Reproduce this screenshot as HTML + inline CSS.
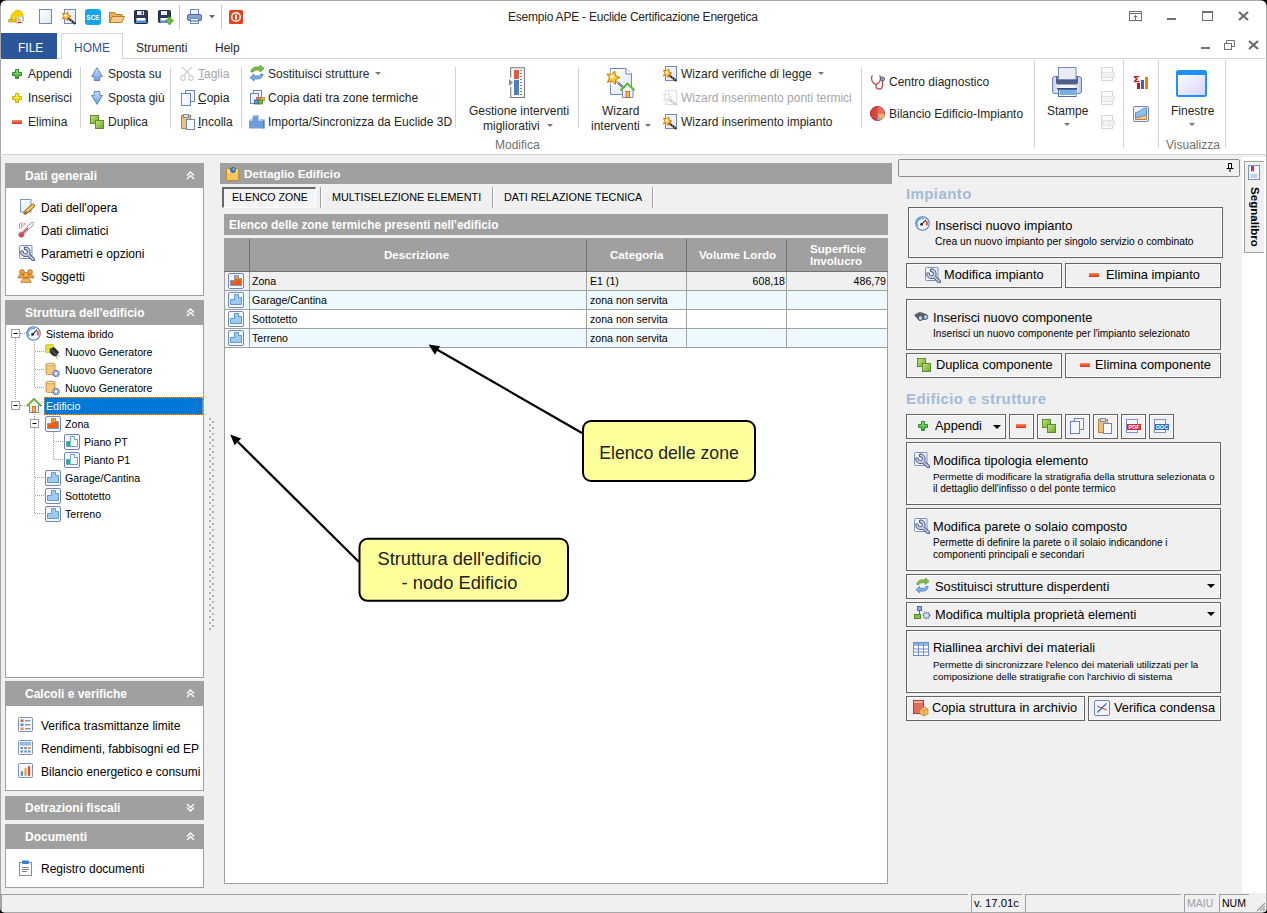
<!DOCTYPE html>
<html><head><meta charset="utf-8">
<style>
*{margin:0;padding:0;box-sizing:border-box}
html,body{width:1267px;height:913px;overflow:hidden;background:#f0f0f0;font-family:"Liberation Sans",sans-serif;font-size:12px;color:#000;position:relative}
.a{position:absolute}
.t{position:absolute;white-space:nowrap;line-height:1}
.rb{color:#262626;font-size:12px}
.sep{position:absolute;width:1px;background:#d4d4d4}
.ph{position:absolute;background:#a0a0a0}
.pht{position:absolute;white-space:nowrap;line-height:1;color:#fff;font-weight:bold;font-size:12px}
.pb{position:absolute;background:#fff;border:1px solid #a0a0a0;border-top:none}
.tr{position:absolute;white-space:nowrap;line-height:1;font-size:10.65px;color:#000}
.gt{position:absolute;white-space:nowrap;line-height:1;font-size:10.6px;color:#000}
.bx{position:absolute;border:1px solid #646464;background:#f0f0f0;box-shadow:inset 0 0 0 1px #fcfcfc}
.bt{position:absolute;white-space:nowrap;line-height:1;font-size:12.8px;color:#000}
.bs{position:absolute;white-space:nowrap;line-height:1;font-size:10.2px;color:#000}
svg{position:absolute;overflow:visible}
</style></head><body>
<svg width="0" height="0" style="position:absolute">
<defs>
<linearGradient id="gG" x1="0" y1="0" x2="0" y2="1"><stop offset="0" stop-color="#9ee07f"/><stop offset="1" stop-color="#2fa52f"/></linearGradient>
<linearGradient id="gY" x1="0" y1="0" x2="0" y2="1"><stop offset="0" stop-color="#fff36b"/><stop offset="1" stop-color="#e8d000"/></linearGradient>
<linearGradient id="gR" x1="0" y1="0" x2="0" y2="1"><stop offset="0" stop-color="#ff8a5c"/><stop offset="1" stop-color="#e0301a"/></linearGradient>
<linearGradient id="gB" x1="0" y1="0" x2="0" y2="1"><stop offset="0" stop-color="#c7defa"/><stop offset="1" stop-color="#6ea0dd"/></linearGradient>
<linearGradient id="gDoc" x1="0" y1="0" x2="1" y2="1"><stop offset="0" stop-color="#fff"/><stop offset="1" stop-color="#dde6f5"/></linearGradient>
<linearGradient id="gGr" x1="0" y1="0" x2="1" y2="1"><stop offset="0" stop-color="#c8e67a"/><stop offset="1" stop-color="#6aa52a"/></linearGradient>
<symbol id="plus" viewBox="0 0 10 10"><path d="M3.5 .5h3v3h3v3h-3v3h-3v-3h-3v-3h3z" stroke-width="1"/></symbol>
<symbol id="minus" viewBox="0 0 10 4"><rect x="0" y="0" width="10" height="4" fill="url(#gR)"/></symbol>
<symbol id="dup" viewBox="0 0 14 14"><rect x=".5" y=".5" width="8" height="8" fill="url(#gGr)" stroke="#5b8f2a"/><rect x="5.5" y="5.5" width="8" height="8" fill="url(#gGr)" stroke="#5b8f2a"/></symbol>
<symbol id="copy" viewBox="0 0 14 16"><rect x="4.5" y=".5" width="9" height="11" fill="#f4f7fc" stroke="#6b86c0"/><rect x=".5" y="3.5" width="9" height="12" fill="#f4f7fc" stroke="#6b86c0"/></symbol>
<symbol id="paste" viewBox="0 0 14 16"><rect x=".5" y="1.5" width="9" height="13" fill="#e9c07d" stroke="#b9853b"/><rect x="2.5" y=".5" width="5" height="3" fill="#ddd" stroke="#7a8fb5"/><rect x="5.5" y="5.5" width="8" height="10" fill="#f7f9fd" stroke="#6b86c0"/></symbol>
<symbol id="wrench" viewBox="0 0 16 16"><rect x=".5" y=".5" width="12.5" height="13" rx="1" fill="#f2f5fb" stroke="#7b8fca"/><g fill="none" stroke-linecap="round"><path d="M6.6 3.4A3.4 3.4 0 1 1 3 7" stroke="#3e4a66" stroke-width="3.6"/><path d="M9 9.5l5.2 5" stroke="#3e4a66" stroke-width="3.6"/><path d="M6.6 3.4A3.4 3.4 0 1 1 3 7" stroke="#c4d4ee" stroke-width="1.8"/><path d="M9 9.5l5.2 5" stroke="#b4c8e8" stroke-width="1.8"/></g></symbol>
<symbol id="gauge" viewBox="0 0 16 16"><circle cx="8" cy="8" r="7.2" fill="#f2f6fc" stroke="#5577c4" stroke-width="1.2"/><path d="M3.2 10.8A5.2 5.2 0 0 1 9.5 2.9" fill="none" stroke="#66a8f0" stroke-width="1.8"/><path d="M12.2 5.5A5.2 5.2 0 0 1 12.5 10" fill="none" stroke="#e0402c" stroke-width="1.8"/><path d="M7 9l4.8-4.8" stroke="#2a2a3a" stroke-width="1.2"/><circle cx="7" cy="9" r="1.5" fill="#2a2a3a"/></symbol>
<symbol id="wiz" viewBox="0 0 16 16"><rect x="3.5" y=".5" width="11" height="14" fill="url(#gDoc)" stroke="#6f86be"/><path d="M7 9l7.5 6" stroke="#222" stroke-width="2.2"/><path d="M7.8 9.6l1 .8M10 11.4l1 .8M12.2 13.2l1 .8" stroke="#bbb" stroke-width="1"/><path d="M6.84 2.69 L7.02 5.97 L10.00 7.37 L6.93 8.55 L6.52 11.81 L4.45 9.27 L1.22 9.88 L3.00 7.12 L1.42 4.24 L4.59 5.09z" fill="#ffc83a" stroke="#e07818" stroke-width="1"/><circle cx="4.6" cy="6.5" r="1.3" fill="#fff8d0"/></symbol>
<symbol id="sost" viewBox="0 0 16 16"><path d="M2 7c0-3 2.5-5 5.5-5H11V0l4 3.5-4 3.5V5H7.5C5.5 5 4.5 6 4.2 7z" fill="#7cc24a" stroke="#4d8e25" stroke-width=".7"/><path d="M14 9c0 3-2.5 5-5.5 5H5v2l-4-3.5L5 9v2h3.5c2 0 3-1 3.3-2z" fill="#7fb0e8" stroke="#3f73b8" stroke-width=".7"/></symbol>
<symbol id="zoneB" viewBox="0 0 16 16"><rect x=".5" y=".5" width="15" height="15" rx="1.5" fill="#f7f9fd" stroke="#6f84c2"/><path d="M2.5 12.5V7.5h4v-5h4v3h3v7z" fill="#9ccbef" stroke="#5f9ad6"/></symbol>
<symbol id="zoneO" viewBox="0 0 16 16"><rect x=".5" y=".5" width="15" height="15" rx="1.5" fill="#f7f9fd" stroke="#6f84c2"/><path d="M2.5 12.5V7.5h4v-5h4v3h3v7z" fill="#ff5a00" stroke="#6f9ad0"/><path d="M7 3h3v3H7z" fill="#ff9a1a"/></symbol>
<symbol id="piano" viewBox="0 0 16 16"><rect x=".5" y=".5" width="15" height="15" rx="1.5" fill="#f7f9fd" stroke="#6f84c2"/><path d="M2.5 12.5V7.5h4v-5h4v3h3v7z" fill="#f3f6fb" stroke="#6f9ad6"/><rect x="3" y="8" width="3.5" height="4" fill="#10c060"/></symbol>
<symbol id="pdfd" viewBox="0 0 16 14"><rect x="1.5" y=".5" width="11" height="13" fill="#fafafa" stroke="#d8d8d8"/><rect x="2" y="5" width="13" height="6" fill="#e4e4e4"/><text x="8.5" y="10" font-size="5.5" font-family="Liberation Sans" font-weight="bold" fill="#fff" text-anchor="middle">PDF</text></symbol>
</defs></svg>

<!-- title bar -->
<div class="a" style="left:0;top:0;width:1267px;height:155px;background:#fff"></div>
<div class="a" style="left:0;top:0;width:1267px;height:1px;background:#a8a8a8"></div>
<div class="a" style="left:0;top:0;width:1px;height:913px;background:#a8a8a8"></div>
<div class="a" style="left:1266px;top:0;width:1px;height:913px;background:#a8a8a8"></div>
<div class="a" style="left:0;top:154px;width:1267px;height:1px;background:#d5d5d5"></div>
<div class="t" style="left:508px;top:11px;font-size:12px;letter-spacing:-.22px;color:#262626">Esempio APE - Euclide Certificazione Energetica</div>

<!-- QAT icons -->
<svg style="left:8px;top:10px" width="16" height="15" viewBox="0 0 16 15"><path d="M2.5 10C2.5 4 6 .3 10 .3s5.5 3.5 5.5 9.5V11z" fill="#f4d000" stroke="#d4a800" stroke-width=".7"/><path d="M.3 10.5c0-1.2 1.5-1.5 3-1.2l11 1.2v1.5H1c-.5 0-.7-.8-.7-1.5z" fill="#f0c800" stroke="#a88a20" stroke-width=".7"/><path d="M6 1.5c-1 2-1 5 0 8" stroke="#fff27a" stroke-width="1"/><rect x="8.8" y="6.8" width="5.8" height="7" fill="#f4f8fc" stroke="#b8c8dc" stroke-width=".6"/><path d="M9.5 8h1.5M9.5 9.5h2.5M9.5 11h3.5M9.5 12.5h4" stroke-width="1.1"/><path d="M9.5 8h1.5" stroke="#3a9a3a"/><path d="M9.5 9.5h2.5" stroke="#e0b020"/><path d="M9.5 11h3.5" stroke="#f08020"/><path d="M9.5 12.5h4" stroke="#e02020"/></svg>
<svg style="left:39px;top:9px" width="13" height="15" viewBox="0 0 13 15"><rect x=".5" y=".5" width="12" height="14" fill="url(#gDoc)" stroke="#6f86be"/></svg>
<svg style="left:61px;top:9px" width="16" height="16"><use href="#wiz" width="16" height="16"/></svg>
<svg style="left:85px;top:9px" width="16" height="16" viewBox="0 0 16 16"><rect x="0" y="0" width="16" height="16" rx="3" fill="#13a4ee"/><text x="8" y="11" font-size="6.5" font-family="Liberation Sans" font-weight="bold" fill="#fff" text-anchor="middle">SCE</text></svg>
<svg style="left:109px;top:11px" width="16" height="12" viewBox="0 0 16 12"><path d="M.5 11.5v-10h5l1.5 2h6v2" fill="#e9b15a" stroke="#b97a2a"/><path d="M.5 11.5l3-6h12l-3 6z" fill="#f6cf86" stroke="#b97a2a"/></svg>
<svg style="left:134px;top:10px" width="14" height="14" viewBox="0 0 14 14"><rect x=".5" y=".5" width="13" height="13" rx="1" fill="#2e3a4e" stroke="#1e2838"/><rect x="3" y="1" width="7" height="4" fill="#e8ecf2"/><rect x="7.5" y="1.5" width="1.5" height="3" fill="#2e3a4e"/><rect x="2.5" y="8" width="9" height="5" fill="#fff"/><rect x="2.5" y="10.5" width="9" height="2.5" fill="#4a90d9"/></svg>
<svg style="left:158px;top:10px" width="16" height="15" viewBox="0 0 16 15"><rect x=".5" y=".5" width="12" height="12" rx="1" fill="#2e3a4e" stroke="#1e2838"/><rect x="3" y="1" width="6" height="4" fill="#e8ecf2"/><rect x="2.5" y="8" width="8" height="4.5" fill="#fff"/><rect x="2.5" y="10.5" width="8" height="2" fill="#4a90d9"/><path d="M10 7h3v3h2.5L11.5 15 7.5 10H10z" fill="#6fc13c" stroke="#3f8a1c" stroke-width=".7"/></svg>
<div class="a" style="left:179px;top:5px;width:1px;height:24px;background:#c8c8c8"></div>
<svg style="left:187px;top:9px" width="15" height="15" viewBox="0 0 15 15"><rect x="3.5" y=".5" width="8" height="5" fill="#eef1f8" stroke="#6f86be"/><rect x=".5" y="5.5" width="14" height="6" rx="1.5" fill="#8aa4d6" stroke="#4f69a8"/><rect x="3.5" y="9.5" width="8" height="5" fill="#fff" stroke="#6f86be"/><rect x="4" y="11" width="7" height="2" fill="#7db3e6"/></svg>
<svg style="left:209px;top:15px" width="6" height="4" viewBox="0 0 6 4"><path d="M0 0h6L3 3.5z" fill="#6a6a6a"/></svg>
<div class="a" style="left:221px;top:5px;width:1px;height:24px;background:#c8c8c8"></div>
<svg style="left:229px;top:10px" width="14" height="14" viewBox="0 0 14 14"><rect x="0" y="0" width="14" height="14" rx="1.5" fill="#e4431b"/><circle cx="7" cy="7" r="4.3" fill="none" stroke="#fff" stroke-width="1.5"/><rect x="6" y="4.5" width="2" height="5" rx=".5" fill="#fff"/></svg>

<!-- window controls -->
<svg style="left:1129px;top:11px" width="13" height="10" viewBox="0 0 13 10"><rect x=".5" y=".5" width="12" height="9" fill="none" stroke="#707070"/><path d="M.5 2.5h12" stroke="#707070"/><path d="M6.5 9V4.5M4.5 6.5l2-2 2 2" fill="none" stroke="#707070"/></svg>
<div class="a" style="left:1167px;top:18px;width:9px;height:2px;background:#707070"></div>
<svg style="left:1202px;top:11px" width="11" height="10" viewBox="0 0 11 10"><rect x=".5" y=".5" width="10" height="9" fill="none" stroke="#707070"/><rect x="0" y="0" width="11" height="2" fill="#707070"/></svg>
<svg style="left:1238px;top:11px" width="11" height="10" viewBox="0 0 11 10"><path d="M1 1l9 8M10 1L1 9" stroke="#6a6a6a" stroke-width="2.1"/></svg>
<div class="a" style="left:1201px;top:47px;width:9px;height:2px;background:#707070"></div>
<svg style="left:1224px;top:40px" width="11" height="10" viewBox="0 0 11 10"><rect x=".5" y="3.5" width="7" height="6" fill="none" stroke="#707070"/><path d="M2.5 3.5v-3h8v6h-3" fill="none" stroke="#707070"/></svg>
<svg style="left:1248px;top:40px" width="11" height="10" viewBox="0 0 11 10"><path d="M1 1l9 8M10 1L1 9" stroke="#6a6a6a" stroke-width="2.1"/></svg>

<!-- tabs -->
<div class="a" style="left:0;top:58px;width:1267px;height:1px;background:#d5d5d5"></div>
<div class="a" style="left:1px;top:33px;width:56px;height:26px;background:#2b579a"></div>
<div class="t" style="left:18px;top:42px;color:#fff;font-size:12px">FILE</div>
<div class="a" style="left:61px;top:33px;width:62px;height:26px;background:#fff;border:1px solid #d5d5d5;border-bottom:none"></div>
<div class="t" style="left:74px;top:42px;color:#2b579a;font-size:12px">HOME</div>
<div class="t rb" style="left:136px;top:42px">Strumenti</div>
<div class="t rb" style="left:215px;top:42px">Help</div>

<!-- ribbon group 1 -->
<svg style="left:12px;top:69px" width="10" height="10"><use href="#plus" width="10" height="10" fill="url(#gG)" stroke="#2d8a2d"/></svg>
<svg style="left:12px;top:93px" width="10" height="10"><use href="#plus" width="10" height="10" fill="url(#gY)" stroke="#c9b300"/></svg>
<svg style="left:12px;top:120px" width="10" height="4"><use href="#minus" width="10" height="4"/></svg>
<div class="t rb" style="left:28px;top:68px">Appendi</div>
<div class="t rb" style="left:28px;top:92px">Inserisci</div>
<div class="t rb" style="left:28px;top:116px">Elimina</div>
<div class="sep" style="left:80px;top:67px;height:61px"></div>
<svg style="left:91px;top:67px" width="12" height="14" viewBox="0 0 12 14"><path d="M6 .6l5.4 8.9H8.8v4h-5.6v-4H.6z" fill="url(#gB)" stroke="#4f7fc4" stroke-width=".9"/></svg>
<svg style="left:91px;top:91px" width="12" height="14" viewBox="0 0 12 14"><path d="M6 13.4l5.4-8.9H8.8v-4h-5.6v4H.6z" fill="url(#gB)" stroke="#4f7fc4" stroke-width=".9"/></svg>
<svg style="left:90px;top:115px" width="14" height="14"><use href="#dup" width="14" height="14"/></svg>
<div class="t rb" style="left:108px;top:68px">Sposta su</div>
<div class="t rb" style="left:108px;top:92px">Sposta giù</div>
<div class="t rb" style="left:108px;top:116px">Duplica</div>
<div class="sep" style="left:170px;top:67px;height:61px"></div>
<svg style="left:180px;top:66px" width="14" height="15" viewBox="0 0 14 15"><path d="M2 1l9 9M12 1l-9 9" stroke="#cfcfcf" stroke-width="1.3"/><circle cx="3" cy="12" r="2.3" fill="none" stroke="#cfcfcf" stroke-width="1.2"/><circle cx="11" cy="12" r="2.3" fill="none" stroke="#cfcfcf" stroke-width="1.2"/></svg>
<svg style="left:181px;top:90px" width="14" height="16"><use href="#copy" width="14" height="16"/></svg>
<svg style="left:181px;top:114px" width="14" height="16"><use href="#paste" width="14" height="16"/></svg>
<div class="t rb" style="left:198px;top:68px;color:#a6a6a6">Taglia</div>
<div class="a" style="left:198px;top:79px;width:6px;height:1px;background:#a6a6a6"></div>
<div class="t rb" style="left:198px;top:92px">Copia</div>
<div class="a" style="left:198px;top:103px;width:8px;height:1px;background:#262626"></div>
<div class="t rb" style="left:198px;top:116px">Incolla</div>
<div class="a" style="left:198px;top:127px;width:3px;height:1px;background:#262626"></div>
<div class="sep" style="left:241px;top:67px;height:61px"></div>
<svg style="left:249px;top:65px" width="16" height="16"><use href="#sost" width="16" height="16"/></svg>
<svg style="left:250px;top:90px" width="16" height="15" viewBox="0 0 16 15"><rect x="3.5" y=".5" width="8" height="9" fill="#f4f7fc" stroke="#6b86c0"/><rect x=".5" y="3.5" width="8" height="10" fill="#eef2fa" stroke="#6b86c0"/><rect x="6.5" y="7.5" width="4" height="3.5" fill="#f08060" stroke="#b05030" stroke-width=".6"/><rect x="10.5" y="7.5" width="4" height="3.5" fill="#f0b050" stroke="#b07020" stroke-width=".6"/><rect x="4.5" y="10" width="4" height="4" fill="#4a9ae0" stroke="#1e5aa0" stroke-width=".7"/><rect x="8.5" y="10" width="4" height="4" fill="#7cc030" stroke="#3a7a10" stroke-width=".7"/></svg>
<svg style="left:249px;top:115px" width="16" height="14" viewBox="0 0 16 14"><path d="M0 13.5V5.5h3.5V1.5L5 0h4.5v5.5H13l1.5-1.5H15.5v9.5z" fill="#6c9fd8"/><path d="M3.5 1.5L5 0h4.5L8 1.5z" fill="#a8c8ee"/><path d="M0 5.5L1.5 4h2v1.5zM9.5 5.5L11 4h4.5L14 5.5z" fill="#a8c8ee"/><path d="M14 5.5h1.5v8H14z" fill="#4f82c0"/></svg>
<div class="t rb" style="left:268px;top:68px">Sostituisci strutture</div>
<svg style="left:375px;top:72px" width="6" height="4" viewBox="0 0 6 4"><path d="M0 0h6L3 3z" fill="#777"/></svg>
<div class="t rb" style="left:268px;top:92px">Copia dati tra zone termiche</div>
<div class="t rb" style="left:268px;top:116px">Importa/Sincronizza da Euclide 3D</div>
<div class="sep" style="left:455px;top:67px;height:61px"></div>
<svg style="left:509px;top:67px" width="16" height="31" viewBox="0 0 16 31"><path d="M1.7 10.8V.7h13.8v29.8H1.7V20" fill="none" stroke="#7a7a7a" stroke-width="1.1"/><rect x="5" y="3" width="5" height="9" fill="#dd5c3a"/><rect x="5" y="13" width="5" height="15" fill="#4a7fc0"/><path d="M11 3.3h2M11 6.4h2M11 9.4h2M11 12.4h2M11 15.4h2M11 18.4h2M11 21.4h2M11 24.4h2M11 27.4h2" stroke="#777" stroke-width="1"/><path d="M0 12l4 3.5-4 3.5z" fill="#8a8a8a"/></svg>
<div class="t rb" style="left:469px;top:105px">Gestione interventi</div>
<div class="t rb" style="left:483px;top:120px">migliorativi</div>
<svg style="left:547px;top:124px" width="6" height="3" viewBox="0 0 6 3"><path d="M0 0h6L3 3z" fill="#777"/></svg>
<div class="t rb" style="left:495px;top:139px;color:#6f6f6f">Modifica</div>
<div class="sep" style="left:578px;top:67px;height:61px"></div>
<svg style="left:604px;top:67px" width="31" height="31" viewBox="0 0 31 31"><path d="M6.5 1.5H22l5.5 5.5v20.5h-21z" fill="url(#gDoc)" stroke="#6f86be"/><path d="M22 1.5V7h5.5" fill="#fff" stroke="#6f86be"/><path d="M12 14l9 8" stroke="#3a4a6a" stroke-width="2"/><path d="M12.5 14.5l8 7" stroke="#fff" stroke-width=".6"/><circle cx="8.9" cy="10.8" r="7.5" fill="#fff6b0" opacity=".5"/><path d="M10.71 4.04 L11.46 8.72 L15.89 10.43 L11.67 12.60 L11.41 17.34 L8.05 13.99 L3.46 15.21 L5.60 10.97 L3.03 6.99 L7.72 7.72z" fill="#ffcc33" stroke="#d8701a" stroke-width="1"/><circle cx="8" cy="9.5" r="2" fill="#fffbe0"/><path d="M18.5 21v9.5h10.5V21" fill="#f4f7fc" stroke="#6f86be"/><path d="M16.5 23.5l7-7 7 7" fill="none" stroke="#5cb82a" stroke-width="1.8"/><rect x="22" y="24.5" width="3.6" height="6" fill="#f5b860" stroke="#c8600a" stroke-width=".9"/></svg>
<div class="t rb" style="left:602px;top:105px">Wizard</div>
<div class="t rb" style="left:591px;top:120px">interventi</div>
<svg style="left:645px;top:124px" width="6" height="3" viewBox="0 0 6 3"><path d="M0 0h6L3 3z" fill="#777"/></svg>
<svg style="left:662px;top:66px" width="16" height="16"><use href="#wiz" width="16" height="16"/></svg>
<svg style="left:662px;top:90px;opacity:.25" width="16" height="16"><use href="#wiz" width="16" height="16" style="filter:grayscale(1)"/></svg>
<svg style="left:662px;top:114px" width="16" height="16"><use href="#wiz" width="16" height="16"/></svg>
<div class="t rb" style="left:681px;top:68px">Wizard verifiche di legge</div>
<svg style="left:818px;top:72px" width="6" height="4" viewBox="0 0 6 4"><path d="M0 0h6L3 3z" fill="#777"/></svg>
<div class="t rb" style="left:681px;top:92px;color:#a6a6a6">Wizard inserimento ponti termici</div>
<div class="t rb" style="left:681px;top:116px">Wizard inserimento impianto</div>
<div class="sep" style="left:861px;top:67px;height:61px"></div>
<svg style="left:870px;top:74px" width="16" height="16" viewBox="0 0 16 16"><path d="M2.5 1.5c-1.5 1-1.5 5 1 7.5 1.5 1.5 3.5 1.5 5 0 2.5-2.5 2.5-6.5 1-7.5" fill="none" stroke="#c05050" stroke-width="1.4"/><path d="M6 10v2c0 2.5 2 3 3.5 3s3-1 3-4V6" fill="none" stroke="#c05050" stroke-width="1.4"/><circle cx="12.5" cy="5" r="2" fill="#8fa8c8" stroke="#557"/></svg>
<svg style="left:870px;top:106px" width="15" height="15" viewBox="0 0 15 15"><circle cx="7.5" cy="7.5" r="7" fill="#d9453a" stroke="#a22"/><path d="M7.5 7.5V.5a7 7 0 0 1 7 7z" fill="#e46b5f"/><path d="M7.5 7.5h7a7 7 0 0 1-4 6.3z" fill="#f5b060"/><path d="M7.5 7.5l3 6.3a7 7 0 0 1-3 .7z" fill="#8ab4e6"/></svg>
<div class="t rb" style="left:889px;top:76px">Centro diagnostico</div>
<div class="t rb" style="left:889px;top:108px">Bilancio Edificio-Impianto</div>
<div class="sep" style="left:1034px;top:60px;height:88px"></div>
<svg style="left:1052px;top:67px" width="30" height="30" viewBox="0 0 30 30"><defs><linearGradient id="gPr" x1="0" y1="0" x2="1" y2="0"><stop offset="0" stop-color="#c8d0e4"/><stop offset=".3" stop-color="#f4f6fa"/><stop offset=".7" stop-color="#f4f6fa"/><stop offset="1" stop-color="#c0c8dc"/></linearGradient></defs><rect x=".5" y="9.5" width="29" height="17" rx="2.5" fill="url(#gPr)" stroke="#6f80b0"/><path d="M4 9.5h22v5.5c0 2-1 2.5-2.5 2.5h-17C5 17.5 4 17 4 15z" fill="#4f5f88"/><path d="M5 10h20v2H5z" fill="#8a9ac0"/><rect x="6.5" y=".5" width="17.5" height="12" fill="#e9edf6" stroke="#7888c0"/><rect x="5" y="21" width="20" height="1.5" fill="#3a4a78"/><rect x="6.5" y="22.5" width="17.5" height="7" fill="#fff" stroke="#5a6aa0"/><rect x="7.5" y="23" width="15.5" height="5" fill="#72b0e6"/></svg>
<div class="t rb" style="left:1047px;top:105px">Stampe</div>
<svg style="left:1064px;top:123px" width="6" height="3" viewBox="0 0 6 3"><path d="M0 0h6L3 3z" fill="#777"/></svg>
<svg style="left:1100px;top:67px" width="16" height="14"><use href="#pdfd" width="16" height="14"/></svg>
<svg style="left:1100px;top:91px" width="16" height="14" viewBox="0 0 16 14"><rect x="1.5" y=".5" width="11" height="13" fill="#fafafa" stroke="#d8d8d8"/><rect x="2" y="5" width="13" height="6" fill="#e4e4e4"/><text x="8.5" y="10" font-size="5.5" font-family="Liberation Sans" font-weight="bold" fill="#fff" text-anchor="middle">DOC</text></svg>
<svg style="left:1100px;top:115px" width="16" height="14" viewBox="0 0 16 14"><rect x="1.5" y=".5" width="11" height="13" fill="#fafafa" stroke="#d8d8d8"/><rect x="2" y="5" width="13" height="6" fill="#e4e4e4"/><text x="8.5" y="10" font-size="5.5" font-family="Liberation Sans" font-weight="bold" fill="#fff" text-anchor="middle">XLS</text></svg>
<div class="sep" style="left:1123px;top:60px;height:88px"></div>
<svg style="left:1133px;top:75px" width="16" height="14" viewBox="0 0 16 14"><path d="M.8 1h5.5v1.2H3.1l1.9 1.9-1.9 2h3.3v1.2H.8V6.2l2.1-2.1L.8 2z" fill="#c81818"/><rect x="4" y="8" width="3" height="6" fill="#d40f0f"/><rect x="8" y="5" width="3" height="9" fill="#3a68b8"/><rect x="12" y="2" width="3" height="12" fill="#f57c00"/></svg>
<svg style="left:1133px;top:106px" width="16" height="16" viewBox="0 0 16 16"><rect x=".5" y=".5" width="15" height="15" rx="1.5" fill="#f2f5fb" stroke="#6f84c2"/><path d="M2.5 9.5L13.5 6v7.5h-11z" fill="#f5c878" stroke="#b06a30" stroke-width=".8"/><path d="M2.5 6.5c4 0 5-4 11-4.5v7c-4 .5-6.5 2.5-11 2.5z" fill="#8cc0ec" stroke="#4a80c0" stroke-width=".8"/></svg>
<div class="sep" style="left:1158px;top:60px;height:88px"></div>
<svg style="left:1176px;top:70px" width="31" height="27" viewBox="0 0 31 27"><defs><linearGradient id="gW" x1="0" y1="0" x2="1" y2="1"><stop offset="0" stop-color="#fff"/><stop offset="1" stop-color="#d6d4fa"/></linearGradient></defs><rect x="1" y="1" width="29" height="25" rx="1.5" fill="url(#gW)" stroke="#1e90ff" stroke-width="2"/><rect x="1" y="1" width="29" height="4" fill="#1e90ff"/></svg>
<div class="t rb" style="left:1171px;top:105px">Finestre</div>
<svg style="left:1189px;top:123px" width="6" height="3" viewBox="0 0 6 3"><path d="M0 0h6L3 3z" fill="#777"/></svg>
<div class="t rb" style="left:1166px;top:139px;color:#6f6f6f">Visualizza</div>
<div class="sep" style="left:1225px;top:60px;height:88px"></div>
<!-- left panel -->
<div class="ph" style="left:5px;top:163px;width:199px;height:25px"></div>
<div class="pht" style="left:25px;top:170px">Dati generali</div>
<svg style="left:186px;top:171px" width="9" height="9" viewBox="0 0 9 9"><path d="M1 4.5l3.5-3.5 3.5 3.5M1 8l3.5-3.5L8 8" fill="none" stroke="#fff" stroke-width="1.3"/></svg>
<div class="pb" style="left:5px;top:188px;width:199px;height:108px"></div>
<svg style="left:19px;top:199px" width="16" height="16" viewBox="0 0 16 16"><rect x="1.5" y=".5" width="10.5" height="12.5" fill="url(#gDoc)" stroke="#7d94c8"/><path d="M6.3 13.7l7.8-7.2" stroke="#8a5a18" stroke-width="4" stroke-linecap="round"/><path d="M6.3 13.7l7.8-7.2" stroke="#f4c85a" stroke-width="2.4" stroke-linecap="round"/><path d="M4.6 15.4l2.2-3.2 1 1z" fill="#222"/></svg>
<svg style="left:18px;top:222px" width="16" height="16" viewBox="0 0 16 16"><path d="M1.5 1c1 1-1 2 0 3s-1 2 0 3M3.8 .5c1 1-1 2 0 3s-1 2 0 3M6.1 1c1 1-1 2 0 3" stroke="#e03838" stroke-width=".8" fill="none"/><path d="M3.5 12.5L14.3 1.7" stroke="#8e92a8" stroke-width="3.6" stroke-linecap="round"/><path d="M3.5 12.5L14.3 1.7" stroke="#fff" stroke-width="2" stroke-linecap="round"/><path d="M3.5 12.5L10 6" stroke="#e02828" stroke-width="1.1"/><circle cx="3.3" cy="12.7" r="2.6" fill="#e02828" stroke="#9a9aae" stroke-width=".8"/><circle cx="2.7" cy="12" r=".8" fill="#ffb0b0"/></svg>
<svg style="left:19px;top:245px" width="16" height="16"><use href="#wrench" width="16" height="16"/></svg>
<svg style="left:18px;top:268px" width="16" height="15" viewBox="0 0 16 15"><circle cx="4" cy="4" r="2.5" fill="#e8a040" stroke="#a86010" stroke-width=".6"/><circle cx="12" cy="4" r="2.5" fill="#e8a040" stroke="#a86010" stroke-width=".6"/><path d="M0 10c0-3 2-3.5 4-3.5s4 .5 4 3.5zM8 10c0-3 2-3.5 4-3.5s4 .5 4 3.5z" fill="#e8a040" stroke="#a86010" stroke-width=".6"/><circle cx="8" cy="7" r="2.7" fill="#f0b050" stroke="#a86010" stroke-width=".6"/><path d="M3 14.5c0-3.5 2.5-4 5-4s5 .5 5 4z" fill="#f0b050" stroke="#a86010" stroke-width=".6"/></svg>
<div class="t" style="left:41px;top:202px">Dati dell'opera</div>
<div class="t" style="left:41px;top:225px">Dati climatici</div>
<div class="t" style="left:41px;top:248px">Parametri e opzioni</div>
<div class="t" style="left:41px;top:271px">Soggetti</div>

<div class="ph" style="left:5px;top:300px;width:199px;height:25px"></div>
<div class="pht" style="left:25px;top:307px">Struttura dell'edificio</div>
<svg style="left:186px;top:308px" width="9" height="9" viewBox="0 0 9 9"><path d="M1 4.5l3.5-3.5 3.5 3.5M1 8l3.5-3.5L8 8" fill="none" stroke="#fff" stroke-width="1.3"/></svg>
<div class="pb" style="left:5px;top:325px;width:199px;height:353px"></div>
<!-- tree lines -->
<svg style="left:0;top:0" width="210" height="530" viewBox="0 0 210 530">
<g stroke="#a0a0a0" stroke-width="1" stroke-dasharray="1 1" fill="none">
<path d="M15.5 338v62"/><path d="M20 333.5h5"/><path d="M20 405.5h5"/>
<path d="M34.5 342v45"/><path d="M35 351.5h10M35 369.5h10M35 387.5h10"/>
<path d="M34.5 414v100"/><path d="M35 477.5h10M35 495.5h10M35 513.5h10"/>
<path d="M53.5 430v30"/><path d="M54 441.5h10M54 459.5h10"/>
</g>
<g fill="#fff" stroke="#a0a0a0"><rect x="11.5" y="329.5" width="8" height="8"/><rect x="11.5" y="401.5" width="8" height="8"/><rect x="30.5" y="419.5" width="8" height="8"/></g>
<g stroke="#000"><path d="M13.5 333.5h4M13.5 405.5h4M32.5 423.5h4"/></g>
</svg>
<svg style="left:26px;top:326px" width="15" height="15"><use href="#gauge" width="15" height="15"/></svg>
<svg style="left:45px;top:344px" width="16" height="16" viewBox="0 0 16 16"><rect x=".5" y=".5" width="8" height="8" rx="1" fill="#e6dc3a" stroke="#c8b820" stroke-width=".7"/><path d="M6 4.5l3-1.5 5 5-1.5 3z" fill="#2a2a2a"/><path d="M5 5.5c-1 2 0 4 2 5.5s4 2 5.5 1z" fill="#333"/><path d="M4.3 5l2-1 6 6-1 2z" fill="#444"/><path d="M10.5 12.5l2.5 2.5M12.5 10.5L15 13" stroke="#9aa" stroke-width="1"/></svg>
<svg style="left:45px;top:362px" width="16" height="16" viewBox="0 0 16 16"><path d="M1 2.5c0-1.5 9-1.5 9 0v9c0 1.5-9 1.5-9 0z" fill="#f5c978" stroke="#b58030" stroke-width=".8"/><ellipse cx="5.5" cy="2.5" rx="4.5" ry="1.3" fill="#fbe6b8" stroke="#b58030" stroke-width=".6"/><circle cx="11" cy="11.5" r="3.2" fill="#9ab0d8" stroke="#5570a8" stroke-width="1.2" stroke-dasharray="1.5 1"/><circle cx="11" cy="11.5" r="1.2" fill="#fff"/></svg>
<svg style="left:45px;top:380px" width="16" height="16" viewBox="0 0 16 16"><path d="M1 2.5c0-1.5 9-1.5 9 0v9c0 1.5-9 1.5-9 0z" fill="#f5c978" stroke="#b58030" stroke-width=".8"/><ellipse cx="5.5" cy="2.5" rx="4.5" ry="1.3" fill="#fbe6b8" stroke="#b58030" stroke-width=".6"/><circle cx="11" cy="11.5" r="3.2" fill="#9ab0d8" stroke="#5570a8" stroke-width="1.2" stroke-dasharray="1.5 1"/><circle cx="11" cy="11.5" r="1.2" fill="#fff"/></svg>
<svg style="left:26px;top:398px" width="16" height="15" viewBox="0 0 16 15"><path d="M3.5 7v7.5h9V7" fill="#eef2fb" stroke="#7080c8"/><path d="M.8 8.2L8 1.2l7.2 7" fill="none" stroke="#5aa82a" stroke-width="2.2"/><path d="M2 7.6L8 2l6 5.6" fill="none" stroke="#b8e890" stroke-width=".7"/><rect x="6.3" y="8.5" width="3.4" height="6" fill="#f5b050" stroke="#c06010" stroke-width=".8"/></svg>
<div class="a" style="left:44px;top:397px;width:159px;height:18px;background:#0078d7;border:1px dotted #f0a040"></div>
<svg style="left:45px;top:416px" width="16" height="16"><use href="#zoneO" width="16" height="16"/></svg>
<svg style="left:64px;top:434px" width="16" height="16"><use href="#piano" width="16" height="16"/></svg>
<svg style="left:64px;top:452px" width="16" height="16"><use href="#piano" width="16" height="16"/></svg>
<svg style="left:45px;top:470px" width="16" height="16"><use href="#zoneB" width="16" height="16"/></svg>
<svg style="left:45px;top:488px" width="16" height="16"><use href="#zoneB" width="16" height="16"/></svg>
<svg style="left:45px;top:506px" width="16" height="16"><use href="#zoneB" width="16" height="16"/></svg>
<div class="tr" style="left:46px;top:329px">Sistema ibrido</div>
<div class="tr" style="left:65px;top:347px">Nuovo Generatore</div>
<div class="tr" style="left:65px;top:365px">Nuovo Generatore</div>
<div class="tr" style="left:65px;top:383px">Nuovo Generatore</div>
<div class="tr" style="left:46px;top:401px;color:#fff">Edificio</div>
<div class="tr" style="left:65px;top:419px">Zona</div>
<div class="tr" style="left:84px;top:437px">Piano PT</div>
<div class="tr" style="left:84px;top:455px">Pianto P1</div>
<div class="tr" style="left:65px;top:473px">Garage/Cantina</div>
<div class="tr" style="left:65px;top:491px">Sottotetto</div>
<div class="tr" style="left:65px;top:509px">Terreno</div>

<div class="ph" style="left:5px;top:681px;width:199px;height:25px"></div>
<div class="pht" style="left:25px;top:688px">Calcoli e verifiche</div>
<svg style="left:186px;top:689px" width="9" height="9" viewBox="0 0 9 9"><path d="M1 4.5l3.5-3.5 3.5 3.5M1 8l3.5-3.5L8 8" fill="none" stroke="#fff" stroke-width="1.3"/></svg>
<div class="pb" style="left:5px;top:706px;width:199px;height:85px"></div>
<svg style="left:18px;top:717px" width="16" height="16" viewBox="0 0 16 16"><rect x=".5" y=".5" width="14" height="14" rx="1" fill="#f4f7fc" stroke="#7b90c4"/><rect x="2.5" y="2.5" width="3" height="2.5" fill="#e05a40"/><rect x="2.5" y="6.5" width="3" height="2.5" fill="#4a90e0"/><rect x="2.5" y="10.5" width="3" height="2.5" fill="#f09020"/><path d="M7 3.8h5.5M7 7.8h5.5M7 11.8h5.5" stroke="#5a6a90" stroke-width="1"/></svg>
<svg style="left:18px;top:740px" width="16" height="16" viewBox="0 0 16 16"><rect x=".5" y=".5" width="14" height="14" rx="1" fill="#f4f7fc" stroke="#7b90c4"/><rect x="2.5" y="2.5" width="10" height="2.5" fill="#9cc0ec" stroke="#5a80c0" stroke-width=".5"/><rect x="2.5" y="7" width="2.5" height="2" fill="#6b86c0"/><rect x="6.3" y="7" width="2.5" height="2" fill="#6b86c0"/><rect x="10" y="7" width="2.5" height="2" fill="#f09020"/><rect x="2.5" y="10.5" width="2.5" height="2" fill="#6b86c0"/><rect x="6.3" y="10.5" width="2.5" height="2" fill="#6b86c0"/><rect x="10" y="10.5" width="2.5" height="2" fill="#6b86c0"/></svg>
<svg style="left:18px;top:763px" width="16" height="16" viewBox="0 0 16 16"><rect x=".5" y=".5" width="14" height="14" rx="1" fill="#f4f7fc" stroke="#7b90c4"/><rect x="2.8" y="8" width="2.2" height="5" rx="1" fill="#4a90e0"/><rect x="6.4" y="5" width="2.2" height="8" rx="1" fill="#f0a020"/><rect x="10" y="3" width="2.2" height="10" rx="1" fill="#e04a30"/></svg>
<div class="t" style="left:41px;top:720px">Verifica trasmittanze limite</div>
<div class="t" style="left:41px;top:743px">Rendimenti, fabbisogni ed EP</div>
<div class="t" style="left:41px;top:766px">Bilancio energetico e consumi</div>

<div class="ph" style="left:5px;top:796px;width:199px;height:24px"></div>
<div class="pht" style="left:25px;top:802px">Detrazioni fiscali</div>
<svg style="left:186px;top:803px" width="9" height="9" viewBox="0 0 9 9"><path d="M1 1l3.5 3.5L8 1M1 4.5L4.5 8 8 4.5" fill="none" stroke="#fff" stroke-width="1.3"/></svg>

<div class="ph" style="left:5px;top:824px;width:199px;height:25px"></div>
<div class="pht" style="left:25px;top:831px">Documenti</div>
<svg style="left:186px;top:832px" width="9" height="9" viewBox="0 0 9 9"><path d="M1 4.5l3.5-3.5 3.5 3.5M1 8l3.5-3.5L8 8" fill="none" stroke="#fff" stroke-width="1.3"/></svg>
<div class="pb" style="left:5px;top:849px;width:199px;height:39px"></div>
<svg style="left:19px;top:860px" width="14" height="16" viewBox="0 0 14 16"><rect x=".5" y="2.5" width="12" height="13" fill="#fafafa" stroke="#8a8a8a"/><rect x="3" y=".5" width="7" height="3.5" rx="1" fill="#3a80d0"/><path d="M3 7.5h7M3 9.5h7M3 11.5h5" stroke="#8a8a8a"/></svg>
<div class="t" style="left:41px;top:863px">Registro documenti</div>

<!-- splitter dots -->
<div class="a" style="left:209px;top:418px;width:2px;height:212px;background:repeating-linear-gradient(#b0b0b0 0 2px,transparent 2px 6px)"></div>
<div class="a" style="left:212px;top:421px;width:2px;height:209px;background:repeating-linear-gradient(#b0b0b0 0 2px,transparent 2px 6px)"></div>
<!-- center -->
<div class="ph" style="left:220px;top:163px;width:672px;height:21px"></div>
<svg style="left:226px;top:167px" width="14" height="14" viewBox="0 0 14 14"><rect x=".5" y="1.5" width="12" height="12" rx="1" fill="#f5c860" stroke="#c08a20"/><rect x="1.5" y="2.5" width="10" height="3" fill="#fbe4a0"/><circle cx="7" cy="3" r="2.6" fill="#3a78d0" stroke="#1e4a90" stroke-width=".6"/><circle cx="7.7" cy="2.2" r=".9" fill="#a8d0f8"/></svg>
<div class="pht" style="left:244px;top:169px;font-size:11.8px">Dettaglio Edificio</div>
<!-- tabs -->
<div class="a" style="left:222px;top:187px;width:94px;height:21px;background:#f4f4f4;border-top:2px solid #696969;border-left:2px solid #696969;border-right:1px solid #fff;border-bottom:1px solid #fff"></div>
<div class="t" style="left:232px;top:192px;font-size:10.6px">ELENCO ZONE</div>
<div class="a" style="left:320px;top:187px;width:1px;height:21px;background:#a0a0a0"></div>
<div class="a" style="left:321px;top:187px;width:1px;height:21px;background:#fff"></div>
<div class="t" style="left:332px;top:192px;font-size:10.8px">MULTISELEZIONE ELEMENTI</div>
<div class="a" style="left:492px;top:187px;width:1px;height:21px;background:#a0a0a0"></div>
<div class="a" style="left:493px;top:187px;width:1px;height:21px;background:#fff"></div>
<div class="t" style="left:504px;top:192px;font-size:10.8px">DATI RELAZIONE TECNICA</div>
<div class="a" style="left:652px;top:187px;width:1px;height:21px;background:#a0a0a0"></div>
<div class="a" style="left:653px;top:187px;width:1px;height:21px;background:#fff"></div>
<!-- list header -->
<div class="ph" style="left:224px;top:214px;width:664px;height:21px"></div>
<div class="pht" style="left:229px;top:220px;font-size:11.85px">Elenco delle zone termiche presenti nell'edificio</div>
<!-- grid -->
<div class="a" style="left:224px;top:238px;width:664px;height:646px;background:#fff;border:1px solid #a0a0a0"></div>
<div class="a" style="left:224px;top:238px;width:664px;height:34px;background:#a0a0a0;border-bottom:1px solid #707070"></div>
<div class="a" style="left:249px;top:239px;width:1px;height:33px;background:#707070"></div>
<div class="a" style="left:586px;top:239px;width:1px;height:33px;background:#707070"></div>
<div class="a" style="left:686px;top:239px;width:1px;height:33px;background:#707070"></div>
<div class="a" style="left:786px;top:239px;width:1px;height:33px;background:#707070"></div>
<div class="pht" style="left:384px;top:249px;font-size:11.6px">Descrizione</div>
<div class="pht" style="left:610px;top:249px;font-size:11.6px">Categoria</div>
<div class="pht" style="left:699px;top:249px;font-size:11.6px">Volume Lordo</div>
<div class="pht" style="left:810px;top:243px;font-size:11.6px">Superficie</div>
<div class="pht" style="left:810px;top:255px;font-size:11.6px">Involucro</div>
<!-- rows -->
<div class="a" style="left:225px;top:272px;width:662px;height:19px;background:#f0f0f0;border-bottom:1px solid #a0a0a0"></div>
<div class="a" style="left:225px;top:291px;width:662px;height:19px;background:#eef9fd;border-bottom:1px solid #a0a0a0"></div>
<div class="a" style="left:225px;top:310px;width:662px;height:19px;background:#fff;border-bottom:1px solid #a0a0a0"></div>
<div class="a" style="left:225px;top:329px;width:662px;height:19px;background:#eef9fd;border-bottom:1px solid #a0a0a0"></div>
<div class="a" style="left:249px;top:272px;width:1px;height:76px;background:#a0a0a0"></div>
<div class="a" style="left:586px;top:272px;width:1px;height:76px;background:#a0a0a0"></div>
<div class="a" style="left:686px;top:272px;width:1px;height:76px;background:#a0a0a0"></div>
<div class="a" style="left:786px;top:272px;width:1px;height:76px;background:#a0a0a0"></div>
<svg style="left:228px;top:273px" width="16" height="16"><use href="#zoneO" width="16" height="16"/></svg>
<svg style="left:228px;top:292px" width="16" height="16"><use href="#zoneB" width="16" height="16"/></svg>
<svg style="left:228px;top:311px" width="16" height="16"><use href="#zoneB" width="16" height="16"/></svg>
<svg style="left:228px;top:330px" width="16" height="16"><use href="#zoneB" width="16" height="16"/></svg>
<div class="gt" style="left:252px;top:276px">Zona</div>
<div class="gt" style="left:252px;top:295px">Garage/Cantina</div>
<div class="gt" style="left:252px;top:314px">Sottotetto</div>
<div class="gt" style="left:252px;top:333px">Terreno</div>
<div class="gt" style="left:590px;top:276px">E1 (1)</div>
<div class="gt" style="left:590px;top:295px">zona non servita</div>
<div class="gt" style="left:590px;top:314px">zona non servita</div>
<div class="gt" style="left:590px;top:333px">zona non servita</div>
<div class="gt" style="left:740px;top:276px;width:45px;text-align:right">608,18</div>
<div class="gt" style="left:840px;top:276px;width:46px;text-align:right">486,79</div>
<!-- callouts -->
<svg style="left:0;top:0" width="900" height="620" viewBox="0 0 900 620">
<path d="M582 433L436 349" stroke="#000" stroke-width="2.2"/>
<path d="M428.6 344.5l11.5 1.8-5.2 8.4z" fill="#000"/>
<path d="M359 562L238 442" stroke="#000" stroke-width="2.2"/>
<path d="M230.2 434.4l11 4.2-6.6 6.6z" fill="#000"/>
<rect x="583" y="421" width="172" height="60" rx="8" fill="#ffff9c" stroke="#000" stroke-width="2"/>
<rect x="359.5" y="538.8" width="208.5" height="62" rx="8" fill="#ffff9c" stroke="#000" stroke-width="2"/>
</svg>
<div class="t" style="left:583px;top:445px;width:172px;text-align:center;font-size:17.7px;color:#222">Elenco delle zone</div>
<div class="t" style="left:355px;top:550px;width:209px;text-align:center;font-size:18.3px;color:#222">Struttura dell'edificio</div>
<div class="t" style="left:355px;top:574px;width:209px;text-align:center;font-size:18.3px;color:#222">- nodo Edificio</div>
<!-- right -->
<div class="a" style="left:1242px;top:157px;width:24px;height:736px;background:#fff"></div>
<div class="a" style="left:1244px;top:161px;width:20px;height:92px;background:#f0f0f0;border:1px solid #a0a0a0;border-right:none"></div>
<svg style="left:1248px;top:165px" width="12" height="15" viewBox="0 0 12 15"><rect x=".5" y=".5" width="11" height="14" fill="#f4f7fc" stroke="#7b90c4"/><path d="M3 1v6l1.5-1.5L6 7V1z" fill="#d03030"/><path d="M2.5 10h7M2.5 12h7" stroke="#8fa8d0"/></svg>
<div class="t" style="left:1249px;top:187px;font-weight:bold;font-size:11.6px;writing-mode:vertical-rl">Segnalibro</div>
<div class="a" style="left:898px;top:159px;width:342px;height:18px;border:1px solid #8c8c8c;border-radius:2px;background:#f0f0f0"></div>
<svg style="left:1226px;top:163px" width="8" height="9" viewBox="0 0 8 9"><path d="M2 .5h4M2.5 .5v5h3v-5M.5 5.5h7M4 5.5V9" fill="none" stroke="#000"/></svg>
<div class="t" style="left:906px;top:186px;color:#a3bbd9;font-weight:bold;font-size:15px;letter-spacing:.4px">Impianto</div>
<div class="bx" style="left:908px;top:207px;width:315px;height:51px"></div>
<svg style="left:915px;top:216px" width="15" height="16"><use href="#gauge" width="15" height="15"/></svg>
<div class="bt" style="left:935px;top:220px">Inserisci nuovo impianto</div>
<div class="bs" style="left:935px;top:237px;font-size:10.27px">Crea un nuovo impianto per singolo servizio o combinato</div>
<div class="bx" style="left:906px;top:263px;width:156px;height:25px"></div>
<svg style="left:925px;top:267px" width="16" height="16"><use href="#wrench" width="16" height="16"/></svg>
<div class="bt" style="left:944px;top:269px">Modifica impianto</div>
<div class="bx" style="left:1065px;top:263px;width:156px;height:25px"></div>
<svg style="left:1089px;top:273px" width="10" height="4"><use href="#minus" width="10" height="4"/></svg>
<div class="bt" style="left:1106px;top:269px">Elimina impianto</div>

<div class="bx" style="left:906px;top:299px;width:315px;height:51px"></div>
<svg style="left:914px;top:311px" width="15" height="11" viewBox="0 0 15 11"><path d="M.5 3.5L6 .8 9.5 2 13.5 4 12 8.5 8 9 5.5 10 .5 4.5z" fill="#5a5a5a"/><path d="M1 3.5L6 1.5l2 1" stroke="#8a8a8a" stroke-width=".8" fill="none"/><circle cx="6.5" cy="7" r="2.4" fill="#a9d2fb" stroke="#3a3a3a" stroke-width=".8"/><circle cx="11.5" cy="6" r="2.3" fill="#a9d2fb" stroke="#3a3a3a" stroke-width=".8"/></svg>
<div class="bt" style="left:933px;top:312px">Inserisci nuovo componente</div>
<div class="bs" style="left:933px;top:329px;font-size:10.15px">Inserisci un nuovo componente per l'impianto selezionato</div>
<div class="bx" style="left:906px;top:353px;width:156px;height:25px"></div>
<svg style="left:917px;top:358px" width="14" height="14"><use href="#dup" width="14" height="14"/></svg>
<div class="bt" style="left:936px;top:359px">Duplica componente</div>
<div class="bx" style="left:1065px;top:353px;width:156px;height:25px"></div>
<svg style="left:1080px;top:363px" width="10" height="4"><use href="#minus" width="10" height="4"/></svg>
<div class="bt" style="left:1095px;top:359px">Elimina componente</div>

<div class="t" style="left:906px;top:391px;color:#a3bbd9;font-weight:bold;font-size:15px;letter-spacing:.4px">Edificio e strutture</div>
<div class="bx" style="left:906px;top:414px;width:100px;height:25px"></div>
<svg style="left:918px;top:421px" width="10" height="10"><use href="#plus" width="10" height="10" fill="url(#gG)" stroke="#2d8a2d"/></svg>
<div class="bt" style="left:935px;top:420px">Appendi</div>
<svg style="left:993px;top:425px" width="8" height="4" viewBox="0 0 8 4"><path d="M0 0h8L4 4z" fill="#000"/></svg>
<div class="bx" style="left:1009px;top:414px;width:25px;height:25px"></div>
<svg style="left:1016px;top:424px" width="10" height="4"><use href="#minus" width="10" height="4"/></svg>
<div class="bx" style="left:1037px;top:414px;width:25px;height:25px"></div>
<svg style="left:1042px;top:419px" width="14" height="14"><use href="#dup" width="14" height="14"/></svg>
<div class="bx" style="left:1065px;top:414px;width:25px;height:25px"></div>
<svg style="left:1070px;top:418px" width="14" height="16"><use href="#copy" width="14" height="16"/></svg>
<div class="bx" style="left:1093px;top:414px;width:25px;height:25px"></div>
<svg style="left:1098px;top:418px" width="14" height="16"><use href="#paste" width="14" height="16"/></svg>
<div class="bx" style="left:1121px;top:414px;width:25px;height:25px"></div>
<svg style="left:1126px;top:419px" width="16" height="14" viewBox="0 0 16 14"><rect x=".5" y=".5" width="11" height="13" fill="#f4f7fc" stroke="#7b90c4"/><rect x="1" y="5" width="14" height="6" fill="#d9262c"/><text x="8" y="10" font-size="5.5" font-family="Liberation Sans" font-weight="bold" fill="#fff" text-anchor="middle">PDF</text></svg>
<div class="bx" style="left:1149px;top:414px;width:25px;height:25px"></div>
<svg style="left:1154px;top:419px" width="16" height="14" viewBox="0 0 16 14"><rect x=".5" y=".5" width="11" height="13" fill="#f4f7fc" stroke="#7b90c4"/><rect x="1" y="5" width="14" height="6" fill="#2e6cc0"/><text x="8" y="10" font-size="5.5" font-family="Liberation Sans" font-weight="bold" fill="#fff" text-anchor="middle">DOC</text></svg>

<div class="bx" style="left:906px;top:442px;width:315px;height:63px"></div>
<svg style="left:914px;top:452px" width="16" height="16"><use href="#wrench" width="16" height="16"/></svg>
<div class="bt" style="left:933px;top:455px">Modifica tipologia elemento</div>
<div class="bs" style="left:933px;top:472px;font-size:9.88px">Permette di modificare la stratigrafia della struttura selezionata o</div>
<div class="bs" style="left:933px;top:484px;font-size:10.07px">il dettaglio dell'infisso o del ponte termico</div>
<div class="bx" style="left:906px;top:508px;width:315px;height:63px"></div>
<svg style="left:914px;top:518px" width="16" height="16"><use href="#wrench" width="16" height="16"/></svg>
<div class="bt" style="left:933px;top:521px">Modifica parete o solaio composto</div>
<div class="bs" style="left:933px;top:538px;font-size:10.0px">Permette di definire la parete o il solaio indicandone i</div>
<div class="bs" style="left:933px;top:550px">componenti principali e secondari</div>
<div class="bx" style="left:906px;top:574px;width:315px;height:25px"></div>
<svg style="left:915px;top:578px" width="15" height="15"><use href="#sost" width="15" height="15"/></svg>
<div class="bt" style="left:935px;top:581px">Sostituisci strutture disperdenti</div>
<svg style="left:1207px;top:584px" width="8" height="4" viewBox="0 0 8 4"><path d="M0 0h8L4 4z" fill="#000"/></svg>
<div class="bx" style="left:906px;top:602px;width:315px;height:25px"></div>
<svg style="left:914px;top:606px" width="17" height="14" viewBox="0 0 17 14"><rect x="3.5" y=".5" width="4" height="4" fill="#8fb0e0" stroke="#4a70b0"/><path d="M5.5 4.5v4" stroke="#666"/><rect x=".5" y="8.5" width="6" height="4" fill="#8bc34a" stroke="#4a8a20"/><circle cx="12.5" cy="9.5" r="3.2" fill="#b8c8e0" stroke="#5a6a90" stroke-width="1.3" stroke-dasharray="1.4 .9"/><circle cx="12.5" cy="9.5" r="1.1" fill="#fff"/></svg>
<div class="bt" style="left:935px;top:609px">Modifica multipla proprietà elementi</div>
<svg style="left:1207px;top:612px" width="8" height="4" viewBox="0 0 8 4"><path d="M0 0h8L4 4z" fill="#000"/></svg>
<div class="bx" style="left:906px;top:630px;width:315px;height:63px"></div>
<svg style="left:913px;top:642px" width="16" height="14" viewBox="0 0 16 14"><rect x=".5" y=".5" width="15" height="13" fill="#fff" stroke="#6b8fd0"/><rect x="1" y="1" width="14" height="3" fill="#8fb6ea"/><path d="M1 7h14M1 10h14M5.5 1v13M10.5 1v13" stroke="#6b8fd0"/></svg>
<div class="bt" style="left:933px;top:642px">Riallinea archivi dei materiali</div>
<div class="bs" style="left:933px;top:660px;font-size:9.76px">Permette di sincronizzare l'elenco dei materiali utilizzati per la</div>
<div class="bs" style="left:933px;top:672px;font-size:9.87px">composizione delle stratigrafie con l'archivio di sistema</div>
<div class="bx" style="left:906px;top:696px;width:179px;height:25px"></div>
<svg style="left:913px;top:700px" width="15" height="16" viewBox="0 0 15 16"><rect x=".5" y=".5" width="10" height="13" fill="#e86a60" stroke="#b03a30"/><rect x="1" y="1" width="9" height="2" fill="#f8b0a0"/><path d="M7 9l4-2 4 2v5l-4 2-4-2z" fill="#f5c060" stroke="#b07a20" stroke-width=".6"/><path d="M7 9l4 2 4-2M11 11v5" fill="none" stroke="#b07a20" stroke-width=".6"/></svg>
<div class="bt" style="left:932px;top:702px">Copia struttura in archivio</div>
<div class="bx" style="left:1088px;top:696px;width:133px;height:25px"></div>
<svg style="left:1094px;top:700px" width="16" height="16" viewBox="0 0 16 16"><rect x=".5" y=".5" width="15" height="15" rx="1.5" fill="#f2f5fb" stroke="#6f84c2"/><path d="M3 6l9.5 4" stroke="#d84838" stroke-width="1.1"/><path d="M3.3 12.5l9.2-9.2" stroke="#2f5fc8" stroke-width="1.2"/></svg>
<div class="bt" style="left:1114px;top:702px">Verifica condensa</div>
<!-- status bar -->
<div class="a" style="left:1px;top:893px;width:1265px;height:20px;background:#f0f0f0"></div>
<div class="a" style="left:1px;top:894px;width:967px;height:18px;border-top:1px solid #a0a0a0;border-left:1px solid #a0a0a0"></div>
<div class="a" style="left:971px;top:894px;width:51px;height:18px;border-top:1px solid #a0a0a0;border-left:1px solid #a0a0a0"></div>
<div class="t" style="left:974px;top:898px;font-size:11.3px">v. 17.01c</div>
<div class="a" style="left:1025px;top:894px;width:156px;height:18px;border-top:1px solid #a0a0a0;border-left:1px solid #a0a0a0"></div>
<div class="a" style="left:1184px;top:894px;width:32px;height:18px;border-top:1px solid #a0a0a0;border-left:1px solid #a0a0a0"></div>
<div class="t" style="left:1187px;top:898px;font-size:10.5px;color:#a0a0a0">MAIU</div>
<div class="a" style="left:1219px;top:894px;width:30px;height:18px;border-top:1px solid #a0a0a0;border-left:1px solid #a0a0a0"></div>
<div class="t" style="left:1222px;top:898px;font-size:10.5px">NUM</div>
<svg style="left:1254px;top:900px" width="12" height="12" viewBox="0 0 12 12"><path d="M11 3L3 11M11 6L6 11M11 9L9 11" stroke="#a0a0a0" stroke-width="1.2"/></svg>
<div class="a" style="left:0;top:912px;width:1267px;height:1px;background:#a8a8a8"></div>
<svg style="left:0;top:0" width="1267" height="913" viewBox="0 0 1267 913"><path d="M0 0h7a7 7 0 0 0-7 7z" fill="#000"/><path d="M1267 0h-7a7 7 0 0 1 7 7z" fill="#000"/><path d="M0 913v-5a5 5 0 0 0 5 5z" fill="#000"/><path d="M1267 913v-5a5 5 0 0 1-5 5z" fill="#000"/></svg>
</body></html>
